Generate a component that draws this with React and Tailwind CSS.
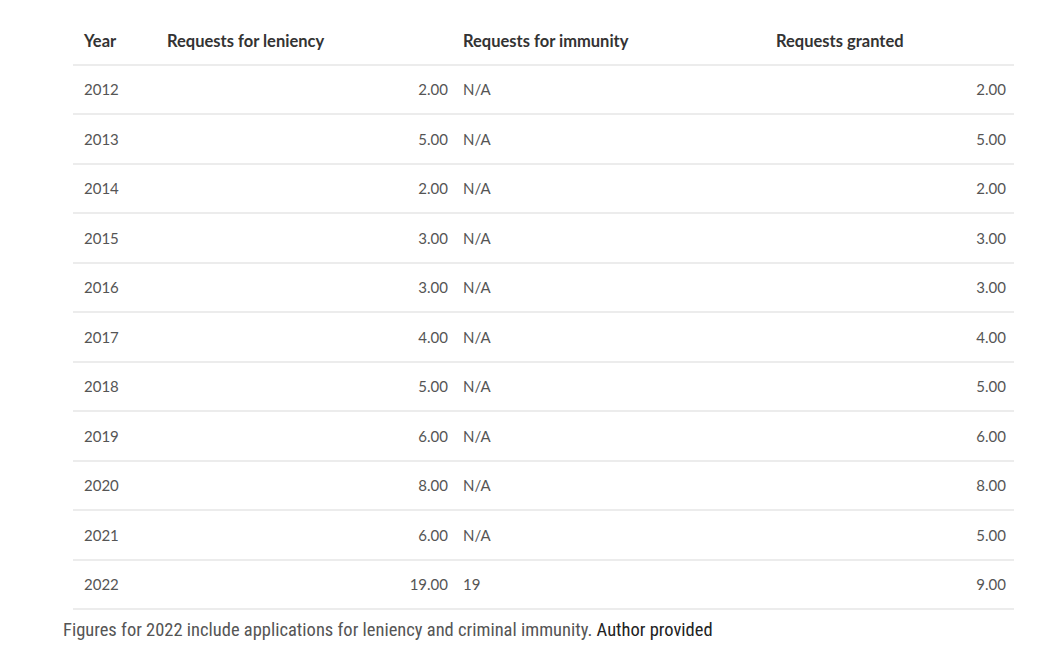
import React from 'react';

const rows = [
    ['2012', '2.00', 'N/A', '2.00'],
    ['2013', '5.00', 'N/A', '5.00'],
    ['2014', '2.00', 'N/A', '2.00'],
    ['2015', '3.00', 'N/A', '3.00'],
    ['2016', '3.00', 'N/A', '3.00'],
    ['2017', '4.00', 'N/A', '4.00'],
    ['2018', '5.00', 'N/A', '5.00'],
    ['2019', '6.00', 'N/A', '6.00'],
    ['2020', '8.00', 'N/A', '8.00'],
    ['2021', '6.00', 'N/A', '5.00'],
    ['2022', '19.00', '19', '9.00'],
];

const App = () => {
    return (
        <div className="w-[1050px] h-[652px] bg-white overflow-hidden pt-4">
            <div className="ml-[73px] w-[941px] font-['Lato',sans-serif]">
                <div className="grid grid-cols-[83px_300px_310px_248px] h-[49.5px] pt-[4px] items-center border-b-2 border-[#ececec] text-[16.5px] font-bold text-[#333]">
                    <div className="pl-[11px]">Year</div>
                    <div className="pl-[11px]">Requests for leniency</div>
                    <div className="pl-[7px]">Requests for immunity</div>
                    <div className="pl-[10px]">Requests granted</div>
                </div>
                {rows.map((r) => (
                    <div
                        key={r[0]}
                        className="grid grid-cols-[83px_300px_310px_248px] h-[49.5px] items-center border-b-2 border-[#ececec] text-[15px] text-[#555]"
                    >
                        <div className="pl-[11px]">{r[0]}</div>
                        <div className="text-right pr-[8px]">{r[1]}</div>
                        <div className="pl-[7px]">{r[2]}</div>
                        <div className="text-right pr-[8px]">{r[3]}</div>
                    </div>
                ))}
            </div>
            <p className="ml-[63px] mt-[10px] text-[18.5px] leading-5 text-[#555] font-['Liberation_Sans_Narrow','Roboto_Condensed','Liberation_Sans',sans-serif]">
                Figures for 2022 include applications for leniency and criminal immunity.{' '}
                <span className="text-[#222]">Author provided</span>
            </p>
        </div>
    );
};

export default App;
